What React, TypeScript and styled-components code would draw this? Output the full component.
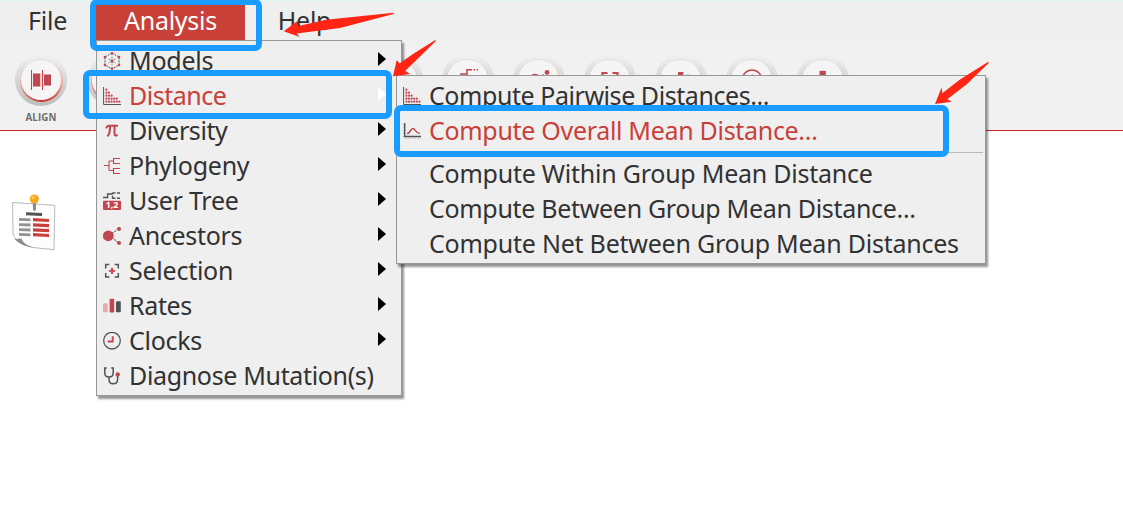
import React from "react";
import styled, { createGlobalStyle } from "styled-components";

const RED = "#c2454f";
const INK = "#505355";

const GlobalStyle = createGlobalStyle`
  html, body { margin: 0; padding: 0; background: #fff; overflow: hidden; }
  * { box-sizing: border-box; }
`;

const Window = styled.div`
  position: relative;
  width: 1123px;
  height: 529px;
  overflow: hidden;
  background: #fff;
  font-family: "Noto Sans", "Open Sans", sans-serif;
  color: #323232;
`;

const MenuBar = styled.nav`
  display: flex;
  height: 41px;
  background: #efefef;
  border-top: 2px solid #e6f3f5;
`;

const MenuTitle = styled.div<{ $width: number; $active?: boolean }>`
  width: ${(p) => p.$width}px;
  height: 38px;
  line-height: 37px;
  text-align: center;
  font-size: 25px;
  white-space: nowrap;
  letter-spacing: -0.25px;
  background: ${(p) => (p.$active ? "#c84038" : "transparent")};
  color: ${(p) => (p.$active ? "#fff" : "#323232")};
`;

const Toolbar = styled.div`
  display: flex;
  height: 90px;
  padding: 13px 0 0 15px;
  gap: 20px;
  background: #f1f1f1;
  border-bottom: 1px solid #cb2a2c;
`;

const Tool = styled.div`
  display: flex;
  flex-direction: column;
  align-items: center;
  width: 51px;
  &:first-child { width: 52px; }
`;

const Knob = styled.div`
  width: 52px;
  height: 52px;
  padding: 4.5px;
  border-radius: 50%;
  background: linear-gradient(#efefef 5%, #dedede 35%, #bdbdbd);
`;

const KnobRing = styled.div`
  width: 43px;
  height: 43px;
  padding: 1.3px;
  border-radius: 50%;
  background: linear-gradient(#e2dfdf 10%, #eaa898 60%, #c9352a);
`;

const KnobFace = styled.div`
  display: flex;
  align-items: center;
  justify-content: center;
  width: 100%;
  height: 100%;
  border-radius: 50%;
  background: #f6f5f5;
`;

const ToolLabel = styled.div`
  margin-top: 5px;
  font: 700 9.8px/14px "Open Sans", sans-serif;
  letter-spacing: 0.1px;
  color: #6e6e6e;
`;

const Workspace = styled.main`
  padding: 63px 0 0 11px;
`;

const Menu = styled.div<{ $x: number; $y: number; $w: number; $h: number }>`
  position: absolute;
  left: ${(p) => p.$x}px;
  top: ${(p) => p.$y}px;
  width: ${(p) => p.$w}px;
  height: ${(p) => p.$h}px;
  padding-top: 2px;
  background: #efefef;
  border: 1px solid #979797;
  box-shadow: 2px 3px 2px rgba(0, 0, 0, 0.42);
`;

const Row = styled.div<{ $active?: boolean }>`
  display: flex;
  align-items: center;
  height: 35px;
  padding: 0 15px 0 6px;
  color: ${(p) => (p.$active ? "#c84038" : "#323232")};
`;

const IconCell = styled.span`
  flex: none;
  width: 18px;
  height: 18px;
  svg { display: block; }
`;

const Label = styled.span<{ $spacing: number }>`
  flex: 1;
  padding-left: 8px;
  font-size: 25px;
  line-height: 35px;
  white-space: nowrap;
  letter-spacing: ${(p) => p.$spacing}px;
`;

const Caret = styled.span<{ $active?: boolean }>`
  width: 0;
  height: 0;
  margin-bottom: 4px;
  border-style: solid;
  border-width: 7.5px 0 7.5px 8px;
  border-color: transparent transparent transparent ${(p) => (p.$active ? "#fff" : "#000")};
`;

const Separator = styled.hr`
  height: 1px;
  margin: 4px 2px 3px;
  border: 0;
  background: #b9b9b9;
`;

const Highlight = styled.div<{ $x: number; $y: number; $w: number; $h: number }>`
  position: absolute;
  left: ${(p) => p.$x}px;
  top: ${(p) => p.$y}px;
  width: ${(p) => p.$w}px;
  height: ${(p) => p.$h}px;
  border: 6px solid #1a9bff;
  border-radius: 7px;
`;

const Arrows = styled.svg`
  position: absolute;
  left: 0;
  top: 0;
`;

const Svg = ({ children }: { children: React.ReactNode }) => (
  <svg width="18" height="18" viewBox="0 0 18 18" fill="none">{children}</svg>
);

const ModelsIcon = () => (
  <Svg>
    <path d="M9 1 16 5V13L9 17 2 13V5Z" stroke={INK} strokeWidth="1" strokeDasharray="1.8 1.1" />
    <path d="M9 5V13M5.6 7 12.4 11M12.4 7 5.6 11" stroke={INK} strokeWidth="0.9" strokeDasharray="1.4 1" />
    {[[9, 1.4], [16, 5], [16, 13], [9, 16.6], [2, 13], [2, 5], [9, 9]].map(([x, y]) => (
      <circle key={`${x}-${y}`} cx={x} cy={y} r="1.35" fill={RED} />
    ))}
  </Svg>
);

const DistanceIcon = () => {
  const dots = [5, 4, 3, 2, 2, 1].flatMap((n, i) => Array.from({ length: n }, (_, j) => [i, j]));
  return (
    <Svg>
      <path d="M.6 0V17.5H18" stroke={INK} strokeWidth="1" />
      {dots.map(([i, j]) => (
        <circle key={`${i}-${j}`} cx={3.4 + i * 2.6} cy={14.7 - j * 3} r="1.1" fill={RED} />
      ))}
    </Svg>
  );
};

const PiIcon = () => (
  <Svg>
    <path d="M3.2 6.4C3.6 4.4 4.4 3.7 6 3.7H15M7.1 4C7.1 9 6.6 12 4.5 14.3M11.5 4V11.8C11.5 14 13.4 14.3 14.5 12.4" stroke={RED} strokeWidth="2" />
  </Svg>
);

const PhylogenyIcon = () => (
  <Svg>
    <path d="M1 8.5H6M6 4V13.5M6 4H10.5M6 13.5H10.5M17 1.5H10.5V6.5H17M17 11.5H10.5V16.5H17" stroke={RED} strokeWidth="1.1" />
  </Svg>
);

const UserTreeIcon = () => (
  <Svg>
    <path d="M0 5.5H4.6V2H9.5" stroke={INK} strokeWidth="1.4" />
    <path d="M9.5 6.8V.8M9.5 1H18M9.5 6.2H18" stroke={INK} strokeWidth="1.4" strokeDasharray="3 1.5" />
    <rect y="8.8" width="18" height="9.2" rx="1" fill={RED} />
    <text x="9" y="16.4" textAnchor="middle" fill="#fff" fontFamily="Open Sans, sans-serif" fontSize="8.8" fontWeight="700">1,2</text>
  </Svg>
);

const AncestorsIcon = () => (
  <Svg>
    <path d="M9 6.5 15 2M9 10.5 15 15.5" stroke={INK} strokeWidth="1.1" strokeDasharray="1.8 1.2" />
    <circle cx="5.3" cy="8.8" r="5.4" fill={RED} />
    <circle cx="16" cy="1.9" r="2" fill={RED} />
    <circle cx="16" cy="16" r="2" fill={RED} />
  </Svg>
);

const SelectionIcon = () => (
  <Svg>
    <path d="M2.7 6.5V2.5H6.3M11.7 2.5H15.3V6.5M15.3 11V15H11.7M6.3 15H2.7V11" stroke={INK} strokeWidth="1.5" />
    <path d="M9 5.8V12M5.9 8.9H12.1" stroke={RED} strokeWidth="1.9" />
  </Svg>
);

const RatesIcon = () => (
  <Svg>
    <rect x="0" y="6.3" width="4.8" height="9" rx="1" fill="#e8acac" />
    <rect x="6.6" y="1.8" width="4.6" height="13.7" rx="1" fill={RED} />
    <rect x="13" y="4.3" width="4.8" height="11" rx="1" fill={INK} />
  </Svg>
);

const ClocksIcon = () => (
  <Svg>
    <circle cx="9" cy="8.7" r="8.3" stroke={INK} strokeWidth="1.3" />
    <path d="M9.7 4.3V9.5H4.7" stroke={RED} strokeWidth="1.9" />
  </Svg>
);

const DiagnoseIcon = () => (
  <Svg>
    <path d="M3.8 1H1.8V6C1.8 11.3 10.2 11.3 10.2 6V1H8.2M6 10V12.5C6 18.3 14.6 18.3 14.6 12.5V9" stroke={INK} strokeWidth="1.5" />
    <circle cx="14.7" cy="7.4" r="2.2" fill={RED} />
  </Svg>
);

const CurveIcon = () => (
  <Svg>
    <path d="M1.7 1V14.5H18" stroke={INK} strokeWidth="1.4" />
    <path d="M4 11.6C7.5 11.6 7.2 6.6 9.8 6.6S12.7 11.6 17 11.6" stroke={RED} strokeWidth="1.5" />
    <path d="M.4 2V15M2.5 16.3H18" stroke="#d59a9a" strokeWidth="1" strokeDasharray="1.2 1.8" />
  </Svg>
);

const AlignIcon = () => (
  <svg width="22" height="22" viewBox="0 0 22 22">
    <path d="M1.5 1V21M12.5 1V21" stroke={RED} strokeWidth="1.1" />
    <rect x="3" y="4.5" width="7.3" height="13" fill={RED} />
    <rect x="14" y="5.5" width="7" height="11" fill={RED} />
  </svg>
);

const TreeTool = () => (
  <svg width="22" height="22" viewBox="0 0 22 22" fill="none">
    <path d="M4 9V5H10V.7H15M16.5 .7H18M19.5 .7H21M10 1V12" stroke={RED} strokeWidth="1.5" />
  </svg>
);

const NodesTool = () => (
  <svg width="22" height="22" viewBox="0 0 22 22" fill={RED}>
    <circle cx="7" cy="11" r="6.2" />
    <circle cx="19" cy="3.4" r="2.4" />
    <path d="M13.5 6.5 15 5 16 6 14.5 7.5Z" />
  </svg>
);

const FrameTool = () => (
  <svg width="22" height="22" viewBox="0 0 22 22" fill="none">
    <path d="M3.5 9V4H8.5M13.5 4H18.5V9" stroke={RED} strokeWidth="2.2" />
  </svg>
);

const BarsTool = () => (
  <svg width="22" height="22" viewBox="0 0 22 22" fill={RED}>
    <rect x="8" y="3" width="5.3" height="16" rx="0.5" />
    <rect x="16" y="5.7" width="4" height="13" rx="0.5" />
  </svg>
);

const ClockTool = () => (
  <svg width="22" height="22" viewBox="0 0 22 22" fill="none">
    <circle cx="11" cy="11" r="10" stroke={RED} strokeWidth="1.4" />
    <path d="M11.5 5.5V12H6" stroke={RED} strokeWidth="1.6" />
  </svg>
);

const PlusTool = () => (
  <svg width="22" height="22" viewBox="0 0 22 22" fill={RED}>
    <rect x="7.5" y="1.8" width="6.3" height="18" />
  </svg>
);

const NoteIcon = () => (
  <svg width="46" height="58" viewBox="0 0 46 58">
    <path d="M1.6 8.5 43.8 11.3 43 55.7 22 53.5C12 51.5 4 47 2 40Z" fill="#fdfdfd" stroke="#b9b9b9" strokeWidth="1" />
    <path d="M3.5 45 10.5 44.5C12.5 49 15 51 22 53.3 14 52.5 8 50 3.5 45Z" fill="#8e8e8e" />
    <path d="M15 18.2 31 19V22L15 21.2Z" fill="#555" />
    {[24, 29.2, 34.2, 39].map((y) => (
      <g key={y}>
        <path d={`M8 ${y}L19.5 ${y + 0.4}V${y + 3.2}L8 ${y + 2.8}Z`} fill="#929292" />
        <path d={`M22 ${y + 0.1}L38 ${y + 0.9}V${y + 4.1}L22 ${y + 3.3}Z`} fill="#c9403a" />
      </g>
    ))}
    <path d="M21.8 9H25V16L23.4 17 22 16Z" fill="#8b8b8b" />
    <circle cx="23.3" cy="5" r="4.6" fill="#f5a81e" />
    <circle cx="22" cy="3.7" r="1.6" fill="#ffc85c" />
  </svg>
);

const tools: React.ReactNode[] = [
  null, null, null, null, null,
  <TreeTool />, <NodesTool />, <FrameTool />, <BarsTool />, <ClockTool />, <PlusTool />,
];

const analysisItems: { label: string; icon: React.FC; spacing: number; leaf?: boolean }[] = [
  { label: "Models", icon: ModelsIcon, spacing: -0.25 },
  { label: "Distance", icon: DistanceIcon, spacing: -0.5 },
  { label: "Diversity", icon: PiIcon, spacing: -0.4 },
  { label: "Phylogeny", icon: PhylogenyIcon, spacing: -0.25 },
  { label: "User Tree", icon: UserTreeIcon, spacing: -0.25 },
  { label: "Ancestors", icon: AncestorsIcon, spacing: -0.3 },
  { label: "Selection", icon: SelectionIcon, spacing: -0.25 },
  { label: "Rates", icon: RatesIcon, spacing: -0.35 },
  { label: "Clocks", icon: ClocksIcon, spacing: -0.3 },
  { label: "Diagnose Mutation(s)", icon: DiagnoseIcon, spacing: -0.34, leaf: true },
];

const distanceItems: { label: string; icon?: React.FC; spacing: number; active?: boolean }[] = [
  { label: "Compute Pairwise Distances...", icon: DistanceIcon, spacing: -0.44 },
  { label: "Compute Overall Mean Distance...", icon: CurveIcon, spacing: -0.31, active: true },
  { label: "Compute Within Group Mean Distance", spacing: -0.24 },
  { label: "Compute Between Group Mean Distance...", spacing: -0.31 },
  { label: "Compute Net Between Group Mean Distances", spacing: -0.23 },
];

export default function App() {
  return (
    <Window>
      <GlobalStyle />
      <MenuBar>
        <MenuTitle $width={95}>File</MenuTitle>
        <MenuTitle $width={1} />
        <MenuTitle $width={149} $active>Analysis</MenuTitle>
        <MenuTitle $width={119}>Help</MenuTitle>
      </MenuBar>
      <Toolbar>
        <Tool>
          <Knob><KnobRing><KnobFace><AlignIcon /></KnobFace></KnobRing></Knob>
          <ToolLabel>ALIGN</ToolLabel>
        </Tool>
        {tools.map((icon, i) => (
          <Tool key={i}>
            <Knob><KnobRing><KnobFace>{icon}</KnobFace></KnobRing></Knob>
          </Tool>
        ))}
      </Toolbar>
      <Workspace><NoteIcon /></Workspace>

      <Menu $x={96} $y={40} $w={306} $h={356}>
        {analysisItems.map(({ label, icon: Icon, spacing, leaf }) => (
          <Row key={label} $active={label === "Distance"}>
            <IconCell><Icon /></IconCell>
            <Label $spacing={spacing}>{label}</Label>
            {!leaf && <Caret $active={label === "Distance"} />}
          </Row>
        ))}
      </Menu>
      <Menu $x={396} $y={75} $w={590} $h={189}>
        {distanceItems.map(({ label, icon: Icon, spacing, active }, i) => (
          <React.Fragment key={label}>
            {i === 2 && <Separator />}
            <Row $active={active}>
              <IconCell>{Icon && <Icon />}</IconCell>
              <Label $spacing={spacing}>{label}</Label>
            </Row>
          </React.Fragment>
        ))}
      </Menu>

      <Highlight $x={90} $y={-1} $w={172} $h={51.5} />
      <Highlight $x={82.5} $y={70} $w={309} $h={48.5} />
      <Highlight $x={393.5} $y={105} $w={555} $h={51.5} />
      <Arrows width="1123" height="529" viewBox="0 0 1123 529" fill="#ff2414">
        <path d="M283.7 31.3 297.7 20.7 298.5 26 326 19.8 393.5 12.7 393.5 13.9 340 28 296.5 33.5 299.7 37Z" />
        <path d="M393 76.3 396.7 60 399.5 63.5 413 54 435.3 40 435.8 41 419 57.5 405.2 70.7 410 74Z" />
        <path d="M935 104 941.7 87.3 942.3 93.3 960 79.5 988.3 61.8 988.7 63 967 84 947.3 99.3 951.7 101.7Z" />
      </Arrows>
    </Window>
  );
}
